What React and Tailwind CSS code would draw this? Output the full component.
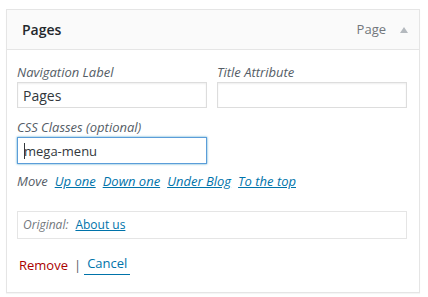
const inputBase =
  'h-[26px] w-full border border-[#dddddd] bg-white px-[5px] text-[14px] text-[#32373c] shadow-[inset_0_1px_2px_rgba(0,0,0,0.07)] outline-none';

export default function App() {
  return (
    <div className="min-h-[297px] bg-white pt-[9px] font-['Open_Sans',sans-serif]">
      <div className="mx-[6px] w-[414px] border border-[#e5e5e5] bg-white shadow-[0_1px_1px_rgba(0,0,0,0.04)]">
        {/* Header */}
        <div className="flex h-[40px] items-center justify-between border-b border-[#e5e5e5] bg-[#fafafa] pl-[15px] pr-[10px]">
          <span className="text-[14px] font-semibold text-[#23282d]">Pages</span>
          <div className="flex items-center">
            <span className="text-[13px] text-[#72777c]">Page</span>
            <svg className="ml-[14px] mr-[1px]" width="8" height="6" viewBox="0 0 8 6">
              <path d="M4 0 L8 6 L0 6 Z" fill="#b4b9be" />
            </svg>
          </div>
        </div>

        {/* Body */}
        <div className="pb-[17px] pl-[10px] pr-[11px] pt-[13px] text-[13px] leading-[18px]">
          <div className="flex gap-[10px]">
            <label className="flex w-[190px] flex-col gap-[1px]">
              <span className="italic text-[#555d66]">Navigation Label</span>
              <input className={inputBase} defaultValue="Pages" />
            </label>
            <label className="flex w-[190px] flex-col gap-[1px]">
              <span className="italic text-[#555d66]">Title Attribute</span>
              <input className={inputBase} defaultValue="" />
            </label>
          </div>

          <label className="mt-[10px] flex w-[190px] flex-col gap-[1px]">
            <span className="italic text-[#555d66]">CSS Classes (optional)</span>
            <div className="flex h-[27px] w-full items-center border border-[#5b9dd9] bg-white pl-[6px] text-[13px] text-[#32373c] shadow-[0_0_2px_rgba(30,140,190,0.8)]">
              <span className="mr-[-1px] inline-block h-[16px] w-px bg-[#32373c]" />
              <span>mega-menu</span>
            </div>
          </label>

          <div className="mt-[8px] flex gap-[7px] italic">
            <span className="text-[#555d66]">Move</span>
            <a href="#" className="text-[#0073aa] underline">Up one</a>
            <a href="#" className="text-[#0073aa] underline">Down one</a>
            <a href="#" className="text-[#0073aa] underline">Under Blog</a>
            <a href="#" className="text-[#0073aa] underline">To the top</a>
          </div>

          <div className="mt-[21px] flex h-[28px] w-[390px] items-center gap-[7px] border border-[#e5e5e5] pl-[5px] text-[12px]">
            <span className="italic text-[#72777c]">Original:</span>
            <a href="#" className="text-[#0073aa] underline">About us</a>
          </div>

          <div className="mt-[15px] flex items-center pl-[2px]">
            <a href="#" className="text-[#a00]">Remove</a>
            <span className="ml-[6px] text-[#555d66]">|</span>
            <a href="#" className="ml-[3px] border-b border-[#0073aa] px-[3px] pb-[2px] text-[#0073aa]">Cancel</a>
          </div>
        </div>
      </div>
    </div>
  );
}
